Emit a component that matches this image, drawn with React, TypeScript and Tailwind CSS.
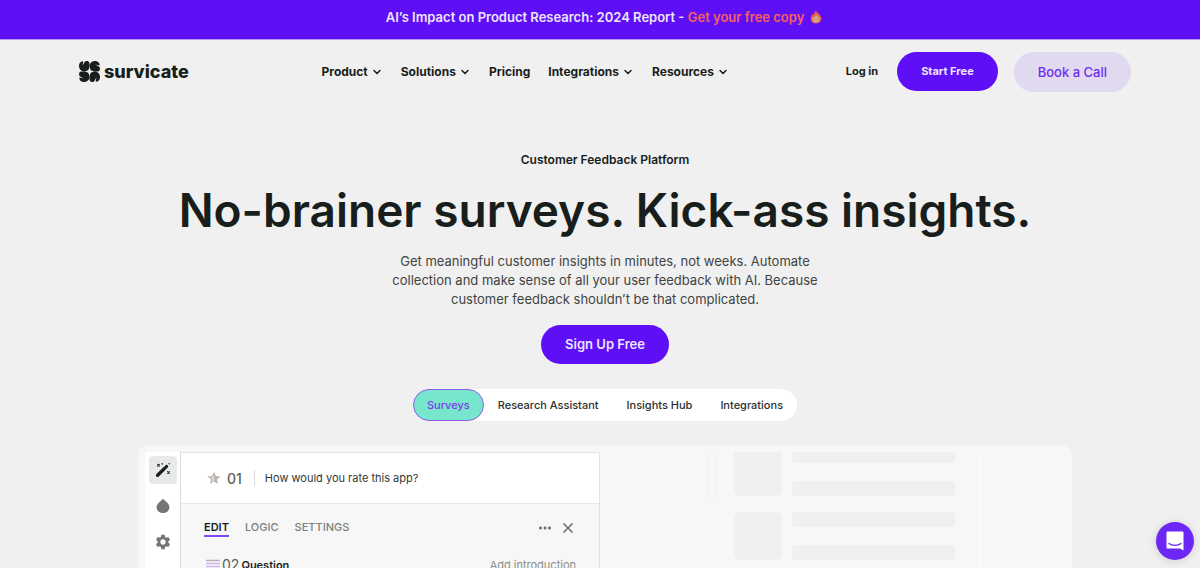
import React from "react";
import { ChevronDown, X } from "lucide-react";
import { MdMoreHoriz, MdSettings } from "react-icons/md";

const navItems = [
  { label: "Product", menu: true },
  { label: "Solutions", menu: true },
  { label: "Pricing", menu: false },
  { label: "Integrations", menu: true },
  { label: "Resources", menu: true },
];

const tabs = ["Surveys", "Research Assistant", "Insights Hub", "Integrations"];

function LogoMark() {
  return (
    <svg viewBox="0 0 20 20" className="size-[21px]" fill="#181e1c" aria-hidden="true">
      {[0, 90, 180, 270].map((angle) => (
        <g key={angle} transform={`rotate(${angle} 10 10)`}>
          <path d="M0 4.6C0 2.4 1.2 0.8 3.4 0.3L4.2 0.6C3.7 2.2 3.5 3.2 3.6 4.4C4.3 2.8 4.9 1.4 6 0.3C7.4 -0.2 9.9 0 9.9 2.2V10H5C2 10 0 7.8 0 4.6Z" />
        </g>
      ))}
      <path d="M10 5.8L11.2 8.8L14.2 10L11.2 11.2L10 14.2L8.8 11.2L5.8 10L8.8 8.8Z" fill="#f0f0f0" />
    </svg>
  );
}

function Flame() {
  return (
    <svg viewBox="0 0 12 14" className="h-3.5 w-3" aria-hidden="true">
      <path d="M6 0.5C6.4 2.5 11.3 4.2 11.3 8.6C11.3 11.8 9 13.5 6 13.5S0.7 11.8 0.7 8.6C0.7 6.4 1.8 5.4 2.6 4C3.2 4.6 3.5 4.7 3.8 4.8C4.2 3.2 4.9 1.6 6 0.5Z" fill="#ea5b52" />
      <path d="M6 4.6C7 5.8 9.6 6.8 9.6 9.4C9.6 11.6 8 12.8 6 12.8S2.4 11.6 2.4 9.4C2.4 7.6 3.6 7 4.2 6.4C4.8 6.2 5.6 5.6 6 4.6Z" fill="#d1a27d" />
    </svg>
  );
}

function Wand() {
  return (
    <svg viewBox="0 0 16 16" className="size-4" fill="none" stroke="currentColor" strokeLinecap="round" aria-hidden="true">
      <path d="M2.6 13.2L9.4 6.6" strokeWidth="3.4" />
      <path d="M11.2 4.8L11.6 4.4" strokeWidth="3.2" />
      <path d="M2.6 2.4L4.4 4.2M4.4 2.4L2.6 4.2M12.6 9.6L14.4 11.4M14.4 9.6L12.6 11.4" strokeWidth="1.1" />
      <path d="M7.2 1.8V2M14.2 1.6V1.8" strokeWidth="1.4" />
    </svg>
  );
}

function Placeholder() {
  return (
    <div className="flex gap-2.5">
      <div className="size-12 rounded-md bg-[#f0f0f0]" />
      <div className="flex flex-1 flex-col justify-between">
        <div className="h-[15px] rounded bg-[#f0f0f0]" />
        <div className="h-[15px] rounded bg-[#f0f0f0]" />
      </div>
    </div>
  );
}

export default function App() {
  return (
    <div className="flex h-screen flex-col overflow-hidden bg-[#f0f0f0] font-['Inter',sans-serif] text-[#181e1c]">
      <div className="flex h-10 shrink-0 items-start justify-center gap-1.5 border-b border-[#b79af5] bg-[#5f0ff5] pt-[7px] pl-2 text-[13px] leading-5 font-semibold text-[#ece4fb]">
        <p>
          AI’s Impact on Product Research: 2024 Report -{" "}
          <a href="#report" className="text-[#f4625c]">Get your free copy</a>
        </p>
        <span className="pt-[3px]"><Flame /></span>
      </div>

      <header className="flex h-[63px] shrink-0 items-center justify-between pr-[69px] pl-[79px]">
        <a href="#home" className="flex items-center gap-1">
          <LogoMark />
          <span className="text-[18px] leading-5 font-extrabold">survicate</span>
        </a>
        <nav className="ml-4 flex items-center gap-[18px] text-[12px] font-bold">
          {navItems.map((item) =>
            item.menu ? (
              <button key={item.label} type="button" className="flex items-center gap-[3px]">
                {item.label}
                <ChevronDown className="size-3" strokeWidth={3} />
              </button>
            ) : (
              <a key={item.label} href="#pricing">{item.label}</a>
            ),
          )}
        </nav>
        <div className="flex items-center">
          <a href="#login" className="mr-[19px] text-[11px] font-bold">Log in</a>
          <a href="#start" className="mr-4 rounded-full bg-[#5f0ff5] px-6 py-[11px] text-[11px] leading-[17px] font-bold text-[#ece4fb]">Start Free</a>
          <a href="#call" className="rounded-full bg-[#e1d9f0] px-6 py-2.5 text-[13px] leading-5 font-medium text-[#6d2cf0]">Book a Call</a>
        </div>
      </header>

      <main className="flex min-h-0 flex-1 flex-col items-center pt-[47px] pl-2.5">
        <p className="text-[12px] leading-5 font-semibold">Customer Feedback Platform</p>
        <h1 className="mt-3 text-[46px] leading-[56px] font-semibold">No-brainer surveys. Kick-ass insights.</h1>
        <p className="mt-3.5 max-w-[430px] text-center text-[13px] leading-[19px] text-[#3f4442]">
          Get meaningful customer insights in minutes, not weeks. Automate collection and make sense of all your user
          feedback with AI. Because customer feedback shouldn’t be that complicated.
        </p>
        <a href="#signup" className="mt-4 rounded-full bg-[#5f0ff5] px-6 py-2.5 text-[13px] leading-[19px] font-semibold text-[#ece4fb]">Sign Up Free</a>

        <div role="tablist" className="mt-[25px] flex shrink-0 rounded-full bg-white text-[11px] leading-[14px] font-medium">
          {tabs.map((tab, i) => (
            <button
              key={tab}
              type="button"
              role="tab"
              aria-selected={i === 0}
              className={
                i === 0
                  ? "rounded-full border border-[#8a5fe8] bg-[#78e6cd] px-[13px] py-2 text-[#7d3bea]"
                  : "border border-transparent px-[13px] py-2 text-[#2b302e]"
              }
            >
              {tab}
            </button>
          ))}
        </div>

        <section className="mt-6 flex min-h-0 w-full max-w-[934px] flex-1 overflow-hidden rounded-t-[10px] bg-[#f7f7f7] pt-[7px] pl-[7px]">
          <div className="flex w-9 shrink-0 flex-col items-center gap-2 border-r border-[#dcdcdc] bg-white pt-1 text-[#747675]">
            <button type="button" aria-label="Edit" className="flex size-7 items-center justify-center rounded bg-[#e8e9e9] text-[#181e1c]">
              <Wand />
            </button>
            <button type="button" aria-label="Design" className="flex size-7 items-center justify-center">
              <svg viewBox="0 0 14 16" className="h-4 w-3.5" fill="currentColor" aria-hidden="true">
                <path d="M7 0.8L11.5 5C14.3 8 13.6 11 12 13C9.5 15.7 4.5 15.7 2 13C0.4 11 -0.3 8 2.5 5Z" />
              </svg>
            </button>
            <button type="button" aria-label="Settings" className="flex size-7 items-center justify-center">
              <MdSettings className="size-[18px]" />
            </button>
          </div>

          <div className="w-[419px] shrink-0 border-t border-r border-[#e2e2e2]">
            <div className="flex h-[51px] items-center border-b border-[#e8e8e8] bg-white pl-[26px]">
              <svg viewBox="0 0 14 14" className="size-3.5" aria-hidden="true">
                <path d="M7 0.7L8.9 5L13.5 5.4L10 8.4L11 13L7 10.6L3 13L4 8.4L0.5 5.4L5.1 5Z" fill="#bdb5ae" />
                <path d="M7 4L7 9.6L5 11L5.6 8.3L3.6 6.5L6.1 6.3Z" fill="#e9e5e1" />
              </svg>
              <span className="ml-1.5 text-[14px] font-medium text-[#5b5f5d]">01</span>
              <span className="mr-2.5 ml-3 h-4 w-px bg-[#d9d9d9]" />
              <span className="text-[11px] text-[#333836]">How would you rate this app?</span>
            </div>
            <div className="px-[23px]">
              <div className="flex items-start justify-between pt-[15px]">
                <div className="flex gap-4 text-[11px] leading-4 font-medium text-[#7c7f7d]">
                  <button type="button" className="border-b-2 border-[#8346f5] font-semibold text-[#181e1c]">EDIT</button>
                  <button type="button" className="border-b-2 border-transparent">LOGIC</button>
                  <button type="button" className="border-b-2 border-transparent">SETTINGS</button>
                </div>
                <div className="flex items-center gap-1.5 text-[#6b6e6c]">
                  <button type="button" aria-label="More"><MdMoreHoriz className="size-[18px]" /></button>
                  <button type="button" aria-label="Close"><X className="size-4" strokeWidth={2.5} /></button>
                </div>
              </div>
              <div className="mt-[18px] flex items-center">
                <svg viewBox="0 0 14 12" className="ml-0.5 h-3 w-3.5" aria-hidden="true">
                  <path d="M0 1.5H14M0 10.5H14" stroke="#b9b2b8" strokeWidth="1.5" />
                  <path d="M0 4.5H14M0 7.5H14" stroke="#cdb5f0" strokeWidth="1.5" />
                </svg>
                <span className="ml-0.5 text-[14px] leading-5 text-[#5b5f5d]">02</span>
                <span className="ml-0.5 text-[11px] font-semibold">Question</span>
                <button type="button" className="ml-auto text-[11px] text-[#8b8e8c]">Add introduction</button>
              </div>
            </div>
          </div>

          <div className="ml-[107px] flex w-[9px] flex-col">
            <div className="h-12 border-x border-[#f1f1f1]" />
          </div>
          <div className="ml-[18px] w-[221px] overflow-hidden">
            <div className="-mt-1 flex flex-col gap-4">
              <Placeholder />
              <Placeholder />
              <Placeholder />
            </div>
          </div>
          <div className="ml-[15px] w-2.5 border-x border-[#fcfcfc]" />
        </section>
      </main>

      <button
        type="button"
        aria-label="Open chat"
        className="fixed right-[6px] bottom-2 flex size-[38px] items-center justify-center rounded-full bg-[#6c27f5] shadow-[0_1px_8px_rgba(0,0,0,0.15)]"
      >
        <svg viewBox="0 0 18 20" className="h-5 w-[18px]" aria-hidden="true">
          <path d="M1.5 0.5H16.5C17 0.5 17.5 1 17.5 1.5V19.5L14 17.5H1.5C1 17.5 0.5 17 0.5 16.5V1.5C0.5 1 1 0.5 1.5 0.5Z" fill="#fff" />
          <path d="M3 12.5C6 15 12 15 15 12.5" fill="none" stroke="#6c27f5" strokeWidth="1.3" strokeLinecap="round" />
        </svg>
      </button>
    </div>
  );
}
